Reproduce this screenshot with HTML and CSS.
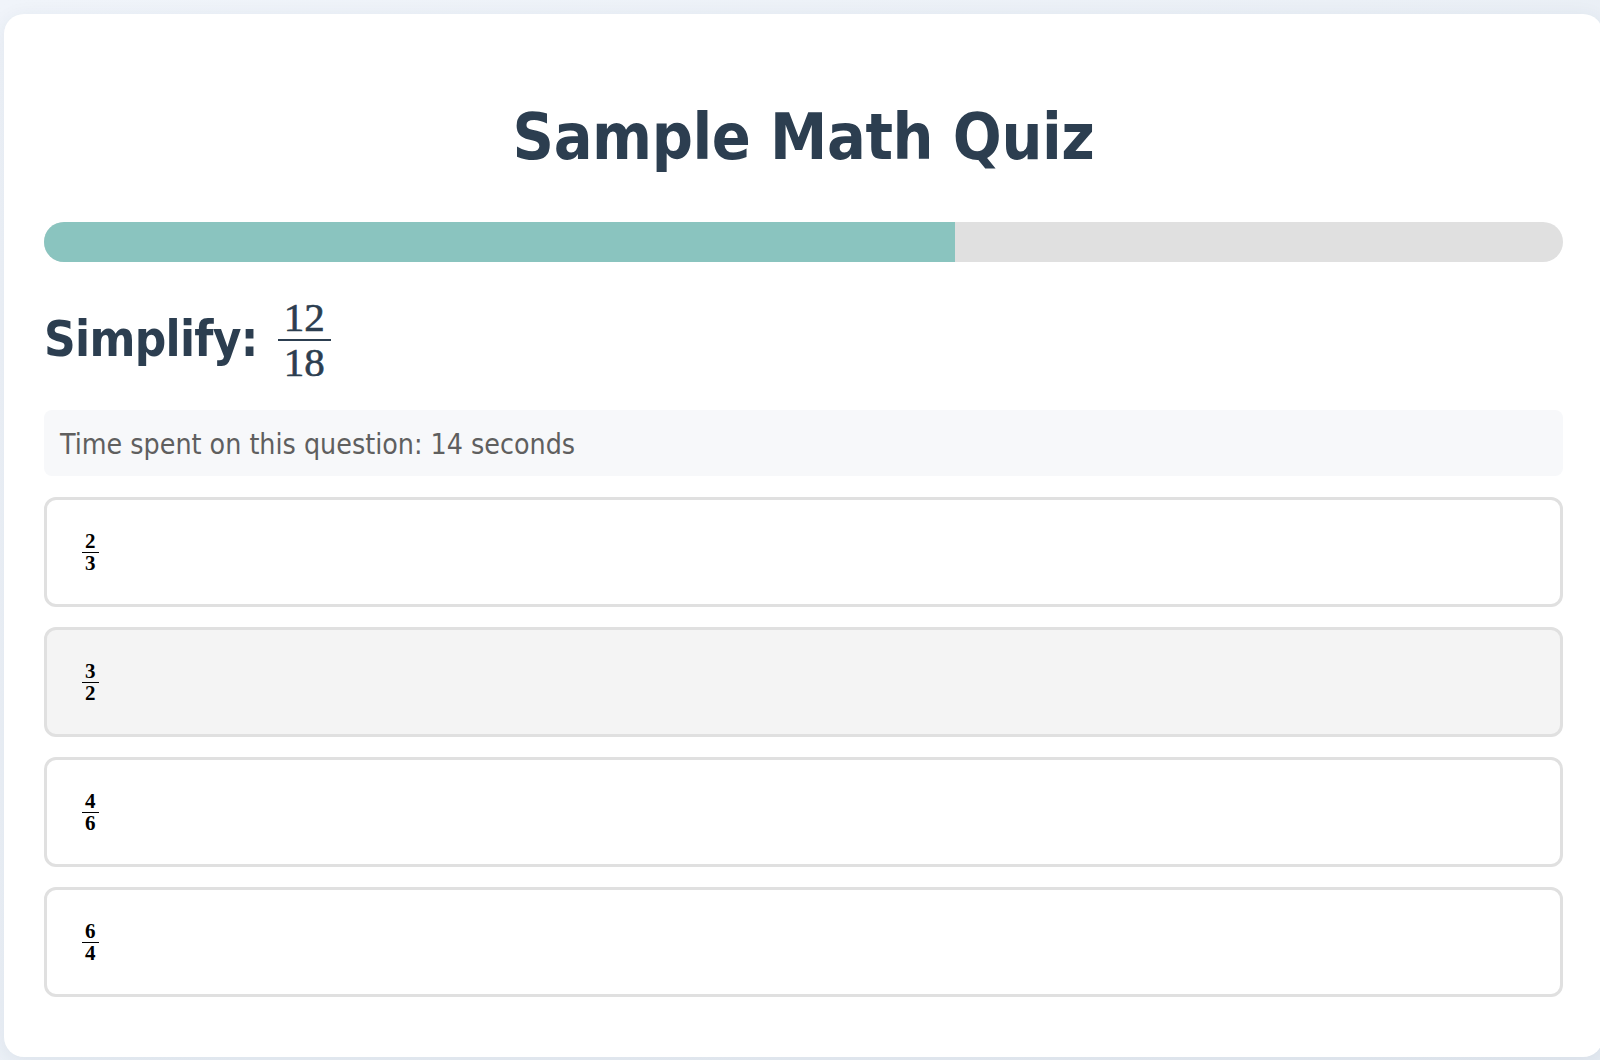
FILE: index.html
```html
<!DOCTYPE html>
<html lang="en">
<head>
<meta charset="utf-8">
<title>Sample Math Quiz</title>
<link rel="stylesheet" href="styles.css">
</head>
<body>
<div class="card">
  <h1 class="title">Sample Math Quiz</h1>
  <div class="progress"><div class="progress-fill" style="width:60%"></div></div>
  <div class="question">
    <span class="question-text">Simplify:</span>
    <span class="frac frac-big"><span class="num">12</span><span class="bar"></span><span class="den">18</span></span>
  </div>
  <div class="timer">Time spent on this question: 14 seconds</div>
  <div class="options">
    <div class="option"><span class="frac frac-small"><span class="num">2</span><span class="bar"></span><span class="den">3</span></span></div>
    <div class="option option-hover"><span class="frac frac-small"><span class="num">3</span><span class="bar"></span><span class="den">2</span></span></div>
    <div class="option"><span class="frac frac-small"><span class="num">4</span><span class="bar"></span><span class="den">6</span></span></div>
    <div class="option"><span class="frac frac-small"><span class="num">6</span><span class="bar"></span><span class="den">4</span></span></div>
  </div>
</div>
</body>
</html>
```

FILE: styles.css
```css
html {
  overflow: hidden;
}
body {
  margin: 0;
  padding: 14px 0 0 4px;
  min-height: 1060px;
  box-sizing: border-box;
  background: linear-gradient(135deg, #f0f4fa 0%, #e6ecf3 100%);
  font-family: "DejaVu Sans Condensed", "DejaVu Sans", sans-serif;
  font-stretch: condensed;
}
.card {
  width: 1599px;
  box-sizing: border-box;
  background: #ffffff;
  border-radius: 20px;
  padding: 40px 40px 40px;
  box-shadow: 0 4px 20px rgba(40, 60, 90, 0.08);
}
.title {
  margin: 44px 0 45px;
  font-size: 64px;
  line-height: 79px;
  letter-spacing: -0.4px;
  font-weight: bold;
  text-align: center;
  color: #2c3e50;
}
.progress {
  height: 40px;
  border-radius: 20px;
  background: #e0e0e0;
  overflow: hidden;
}
.progress-fill {
  height: 100%;
  background: #8ac4bf;
}
.question {
  display: flex;
  align-items: center;
  gap: 20px;
  margin: 38px 0 31px;
  color: #2c3e50;
}
.question-text {
  font-size: 49px;
  line-height: 62px;
  letter-spacing: -0.7px;
  font-weight: bold;
}
.frac {
  display: inline-flex;
  flex-direction: column;
  align-items: stretch;
  text-align: center;
  font-family: "Liberation Serif", serif;
  font-stretch: normal;
  letter-spacing: 0;
}
.frac-big {
  font-size: 41px;
  padding: 0 6px;
  -webkit-text-stroke: 0.6px #2c3e50;
}
.frac-big .num,
.frac-big .den {
  line-height: 34px;
}
.frac-big .bar {
  height: 2px;
  background: #2c3e50;
  margin: 5px -6px 4px;
}
.frac-small {
  font-size: 21px;
  font-weight: bold;
  color: #000;
  padding: 0 3px;
}
.frac-small .num,
.frac-small .den {
  line-height: 18px;
}
.frac-small .bar {
  height: 1px;
  background: #000;
  margin: 2px -3px 1px;
}
.timer {
  background: #f7f8fa;
  border-radius: 8px;
  padding: 18px 16px 14px;
  font-size: 28.3px;
  line-height: 34px;
  color: #5f5f5f;
  margin-bottom: 21px;
}
.options {
  display: flex;
  flex-direction: column;
  gap: 20px;
  margin-bottom: 20px;
}
.option {
  height: 110px;
  box-sizing: border-box;
  border: 3px solid #e0e0e0;
  border-radius: 12px;
  background: #ffffff;
  display: flex;
  align-items: center;
  padding: 0 35px;
}
.option-hover {
  background: #f4f4f4;
}
```
